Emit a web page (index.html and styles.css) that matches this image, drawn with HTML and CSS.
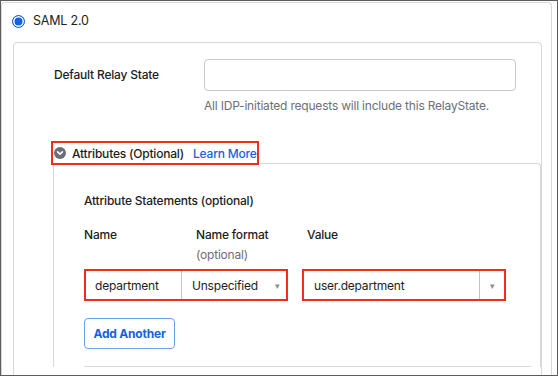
FILE: index.html
```html
<!DOCTYPE html>
<html lang="en">
<head>
  <meta charset="UTF-8" />
  <title>SAML 2.0 Settings</title>
  <link rel="stylesheet" href="styles.css">
</head>
<body>
  <div class="frame">
    <div class="panel">

      <div class="radio-row">
        <span class="radio"></span>
        <span class="radio-label">SAML 2.0</span>
      </div>

      <div class="card">
        <div class="relay-row">
          <label class="field-label">Default Relay State</label>
          <div class="field">
            <div class="text-input"></div>
            <div class="hint">All IDP-initiated requests will include this RelayState.</div>
          </div>
        </div>

        <div class="attr-section">
          <div class="attr-header">
            <svg class="chevron" width="12" height="12" viewBox="0 0 12 12">
              <circle cx="6" cy="6" r="6" fill="#6e6e78"/>
              <path d="M3.6 4.9 L6 7.2 L8.4 4.9" fill="none" stroke="#fff" stroke-width="1.6" stroke-linecap="round" stroke-linejoin="round"/>
            </svg>
            <span class="attr-title">Attributes (Optional)</span>
            <a class="link">Learn More</a>
          </div>

          <div class="attr-panel">
            <div class="statements">Attribute Statements (optional)</div>

            <div class="col-labels">
              <div class="col-label">Name</div>
              <div class="col-label">Name format
                <div class="col-sub">(optional)</div>
              </div>
              <div class="col-label">Value</div>
            </div>

            <div class="attr-row">
              <div class="group highlight">
                <div class="cell name-cell">department</div>
                <div class="cell select-cell format-cell">
                  <span>Unspecified</span>
                  <span class="caret">&#9662;</span>
                </div>
              </div>
              <div class="group highlight">
                <div class="cell value-cell">user.department</div>
                <div class="cell arrow-cell"><span class="caret">&#9662;</span></div>
              </div>
            </div>

            <button class="btn">Add Another</button>

            <div class="divider"></div>
          </div>
        </div>
      </div>

    </div>
  </div>
</body>
</html>
```

FILE: styles.css
```css
body {
  margin: 0;
  font-family: 'Inter', 'Liberation Sans', sans-serif;
  font-size: 12px;
  letter-spacing: -0.2px;
  color: #1d1d21;
  background: #fff;
}

.frame {
  width: 558px;
  height: 376px;
  box-sizing: border-box;
  border: 1px solid #5c5c5c;
  padding: 1px 5px 0 0;
  overflow: hidden;
}

.panel {
  height: 100%;
  box-sizing: border-box;
  border: 1px solid #d7d7dc;
  border-bottom: none;
  border-radius: 4px 4px 0 0;
  padding: 11px 9px 0 11px;
}

.radio-row {
  display: flex;
  align-items: center;
  gap: 8px;
  height: 14px;
  margin-left: -1px;
}

.radio {
  width: 13px;
  height: 13px;
  box-sizing: border-box;
  border-radius: 50%;
  background: #1662dd;
  border: 1.5px solid #1662dd;
  box-shadow: inset 0 0 0 1.5px #fff;
}

.radio-label {
  font-size: 12.5px;
  line-height: 14px;
}

.card {
  margin-top: 14px;
  height: 400px;
  border: 1px solid #d7d7dc;
  border-radius: 4px;
  padding: 16px 0 0 0;
}

.relay-row {
  display: flex;
  padding-left: 40px;
}

.field-label {
  width: 150px;
  line-height: 32px;
  font-weight: 500;
}

.text-input {
  width: 312px;
  height: 32px;
  box-sizing: border-box;
  border: 1px solid #c8c8ce;
  border-radius: 4px;
}

.hint {
  margin-top: 7px;
  line-height: 16px;
  color: #6e6e78;
}

.attr-section {
  margin-left: 39px;
  margin-top: 29px;
}

.attr-header {
  display: inline-flex;
  align-items: center;
  height: 20px;
  padding-left: 1px;
  outline: 2px solid #f52c1c;
}

.chevron {
  margin-right: 6px;
}

.attr-title {
  font-weight: 500;
}

.link {
  margin-left: 9px;
  color: #1662dd;
  font-weight: 500;
}

.attr-panel {
  border-top: 1px solid #d7d7dc;
  border-left: 1px solid #d7d7dc;
  border-right: 1px solid #d7d7dc;
  border-radius: 0 4px 0 0;
  padding: 29px 9px 0 30px;
}

.statements {
  line-height: 16px;
  font-weight: 500;
}

.col-labels {
  display: grid;
  grid-template-columns: 112px 111px 120px;
  margin-top: 18px;
}

.col-label {
  line-height: 16px;
  font-weight: 500;
}

.col-sub {
  margin-top: 4px;
  color: #6e6e78;
  font-weight: 400;
}

.attr-row {
  display: flex;
  gap: 14px;
  margin-top: 6px;
}

.group {
  display: flex;
  width: 204px;
  height: 32px;
  box-sizing: border-box;
}

.highlight {
  border: 2px solid #f52c1c;
}

.cell {
  display: flex;
  align-items: center;
  height: 100%;
}

.name-cell {
  width: 96px;
  padding-left: 9px;
  box-sizing: border-box;
  border-right: 1px solid #c2c2c8;
}

.format-cell {
  flex: 1;
  justify-content: space-between;
  padding: 0 6px 0 10px;
}

.value-cell {
  width: 176px;
  padding-left: 10px;
  box-sizing: border-box;
  border-right: 1px solid #c2c2c8;
}

.arrow-cell {
  flex: 1;
  justify-content: center;
}

.caret {
  color: #8c8c96;
  font-size: 9px;
}

.btn {
  display: block;
  margin-top: 17px;
  width: 91px;
  height: 31px;
  border: 1px solid #6d9ef0;
  border-radius: 4px;
  background: #fff;
  color: #1662dd;
  font-family: inherit;
  font-size: 12px;
  letter-spacing: -0.2px;
  font-weight: 700;
  padding: 0;
}

.divider {
  margin-top: 17px;
  border-top: 1px solid #d7d7dc;
}
```
